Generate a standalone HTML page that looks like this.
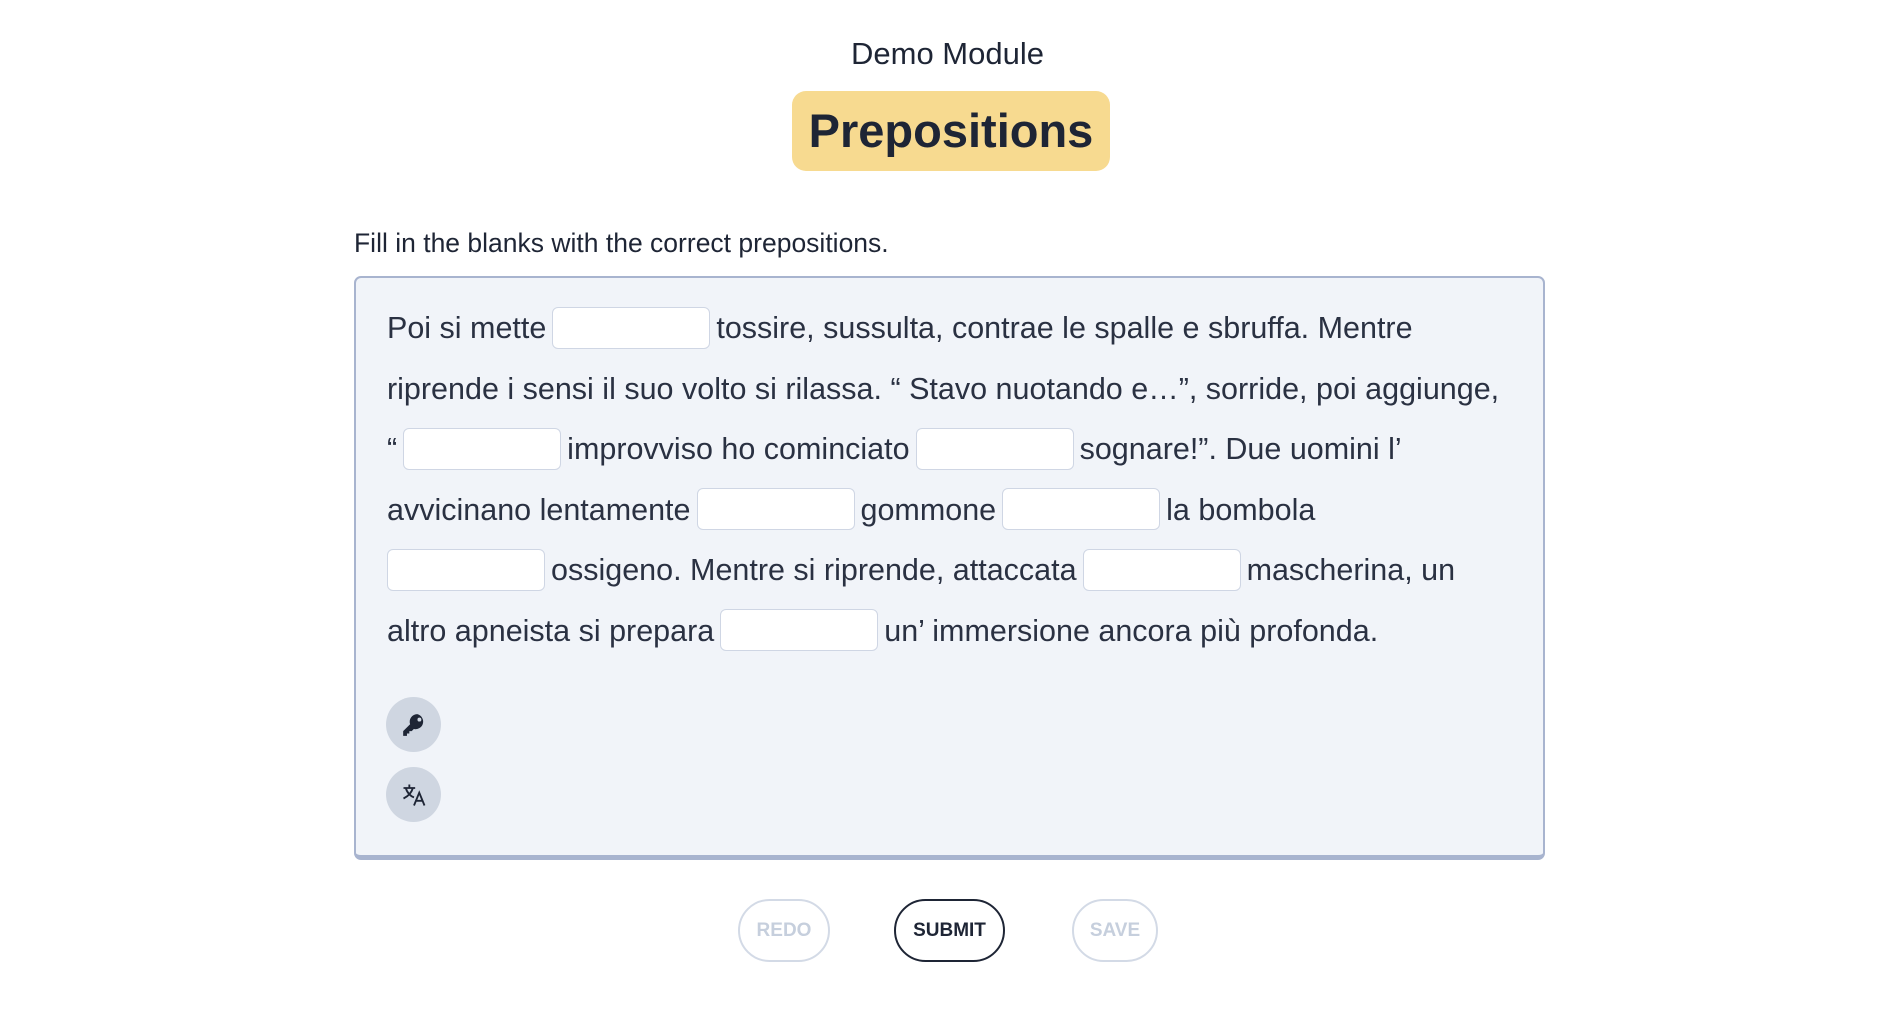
<!DOCTYPE html>
<html><head><meta charset="utf-8"><style>
*{box-sizing:border-box;margin:0;padding:0}
body{width:1895px;height:1014px;background:#fff;font-family:"Liberation Sans",sans-serif;color:#1e2535;position:relative;overflow:hidden}
.mod{position:absolute;left:0;width:1895px;top:36px;text-align:center;font-size:31px}
.badge{position:absolute;left:792px;top:91px;width:318px;height:80px;background:#f7da90;border-radius:14px;text-align:center;line-height:80px;font-weight:bold;font-size:47px}
.instr{position:absolute;left:354px;top:228px;font-size:26.5px;color:#1e2535}
.box{position:absolute;left:354px;top:276px;width:1191px;height:584px;background:#f1f4f9;border:2px solid #a8b4cf;border-bottom-width:5px;border-radius:7px}
.txt{position:absolute;left:31px;top:20px;font-size:30.5px;line-height:60.5px;color:#2a3142;white-space:nowrap}
.in{display:inline-block;width:158px;height:42px;background:#fff;border:1px solid #cfd6e4;border-radius:6px;vertical-align:middle;margin:-4px 6px 0}
.ic{position:absolute;left:30px;width:55px;height:55px;border-radius:50%;background:#cfd6e1;display:flex;align-items:center;justify-content:center}
.btn{position:absolute;top:899px;height:63px;border-radius:32px;font-weight:bold;font-size:19px;display:flex;align-items:center;justify-content:center}
</style></head><body>
<div class="mod">Demo Module</div>
<div class="badge">Prepositions</div>
<div class="instr">Fill in the blanks with the correct prepositions.</div>
<div class="box">
<div class="txt">Poi si mette<span class="in"></span>tossire, sussulta, contrae le spalle e sbruffa. Mentre<br>riprende i sensi il suo volto si rilassa. “ Stavo nuotando e…”, sorride, poi aggiunge,<br>“<span class="in"></span>improvviso ho cominciato<span class="in"></span>sognare!”. Due uomini l’<br>avvicinano lentamente<span class="in"></span>gommone<span class="in"></span>la bombola<br><span class="in" style="margin-left:0"></span>ossigeno. Mentre si riprende, attaccata<span class="in"></span>mascherina, un<br>altro apneista si prepara<span class="in"></span>un’ immersione ancora più profonda.</div>
<div class="ic" style="top:419px"><svg width="26" height="26" viewBox="0 0 24 24"><path fill="#1e2535" d="M15 2a7 7 0 0 0-6.6 9.3L2 17.7V22h3.5v-2.2h2.2v-2.2h2.2l1.9-1.9A7 7 0 1 0 15 2zm2 3.2a1.8 1.8 0 1 1 0 3.6 1.8 1.8 0 0 1 0-3.6z"/></svg></div>
<div class="ic" style="top:489px"><svg width="28" height="28" viewBox="0 0 24 24" fill="none" stroke="#1e2535" stroke-width="1.6"><path d="M3 6h10M8 3v3M5 6c1 4 4 7 7 8M11 6c-1 4-4 7-8 9M12 21l4.5-11 4.5 11M13.6 17h5.8"/></svg></div>
</div>
<div class="btn" style="left:738px;width:92px;border:2px solid #d3dae6;color:#c6cfdd">REDO</div>
<div class="btn" style="left:894px;width:111px;border:2px solid #1e2535;color:#1e2535">SUBMIT</div>
<div class="btn" style="left:1072px;width:86px;border:2px solid #d3dae6;color:#c6cfdd">SAVE</div>
</body></html>
